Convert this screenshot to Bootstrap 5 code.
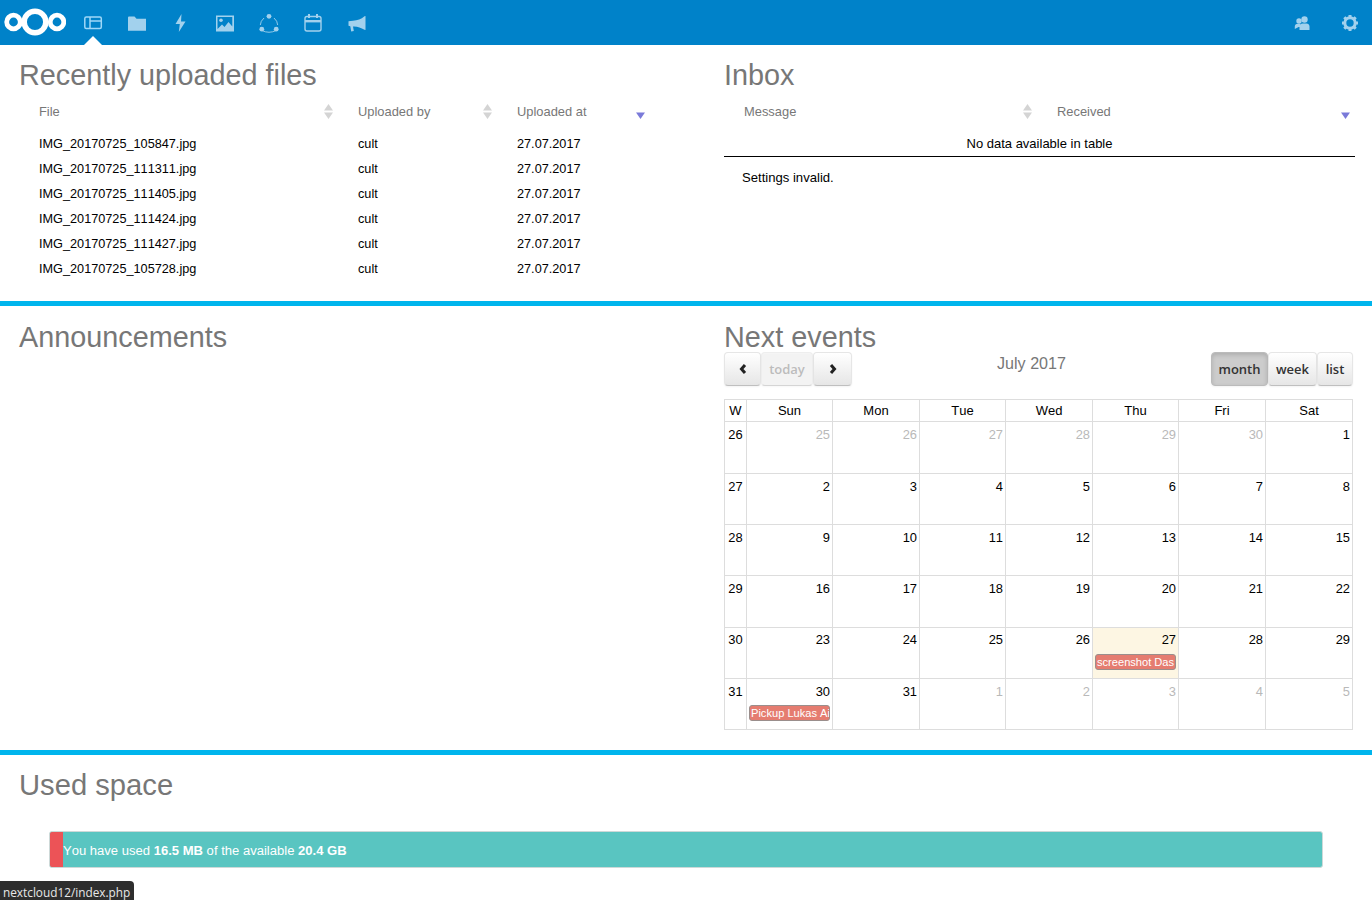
<!DOCTYPE html>
<html lang="en">
<head>
<meta charset="utf-8">
<title>Dashboard</title>
<link href="https://cdn.jsdelivr.net/npm/bootstrap@5.3.0/dist/css/bootstrap.min.css" rel="stylesheet">
<style>
body{font-family:"Liberation Sans",Arial,sans-serif;font-size:13px;font-kerning:none;color:#000;background:#fff;height:900px;overflow:hidden}
.topbar{height:45px;background:#0082c9;color:#a2d1ed}
.topbar svg{display:block}
.brand-logo{margin-left:4px;margin-right:5px;width:62px;height:45px;flex:none}
.app-slot{width:44px;height:45px;position:relative;display:flex;align-items:center;justify-content:center}
.app-slot.is-active{color:#9fd8f8}
.app-slot.is-active::after{content:"";position:absolute;left:13px;bottom:0;border:9px solid transparent;border-top:0;border-bottom-color:#fff}
.side-slot{width:44px;height:45px;display:flex;align-items:center;justify-content:center}
.dash-row{display:grid;grid-template-columns:705px 1fr}
.dash-sep{border-bottom:5px solid #00b5ed}
.pane{padding:0 17px 0 19px}
.pane-title{font-size:28.8px;line-height:36px;font-weight:400;color:#777;margin:0;padding-top:12px}
.row-two .pane-title{padding-top:13px}
.pane-title.space-title{font-size:29.2px}
.files-pane{padding-right:55px}
.row-one{height:261px}
.row-two{height:449px}
.data-tbl{width:100%;table-layout:fixed;border-collapse:collapse;margin-top:5px}
.data-tbl th{font-weight:400;font-size:12.9px;color:#777;height:33px;padding:0 0 6px 20px;position:relative}
.data-tbl td{height:25px;font-size:12.7px;padding:2px 0 0 20px;vertical-align:middle}
.data-tbl .empty-cell{padding:0;font-size:13px;text-align:center;border-bottom:1px solid #000}
.sorter{position:absolute;right:5px;top:6px;width:9px;height:15px;display:block}
.note-line{margin:13px 0 0 18px;line-height:15px;font-size:13.1px}
.cal-bar{display:grid;grid-template-columns:1fr auto 1fr;height:34px;margin-top:-3px;width:629px}
.cal-title{font-size:16.1px;color:#777;line-height:22px;margin-left:-14px}
.cal-btn{font-family:"Open Sans",sans-serif;font-size:13px;font-weight:600;color:#333;height:34px;padding:0;text-align:center;line-height:32px;border:1px solid #e6e6e6;border-bottom-color:#bfbfbf;border-radius:4px;background:linear-gradient(#fff,#e6e6e6);box-shadow:inset 0 1px 0 rgba(255,255,255,.2),0 1px 2px rgba(0,0,0,.05)}
.cal-btn.is-prev{width:37px;display:flex;align-items:center;justify-content:center}
.cal-btn.is-next{width:39px;display:flex;align-items:center;justify-content:center}
.cal-btn.is-off{opacity:.65;color:#999;background:#eee;width:52px}
.cal-btn.is-on{background:#ccc;box-shadow:inset 0 2px 4px rgba(0,0,0,.15),0 1px 2px rgba(0,0,0,.05);border-color:#bbb;color:#333;width:57px}
.cal-btn.is-week{width:49px}
.cal-btn.is-list{width:36px}
.cal-grid{width:629px;table-layout:fixed;margin:13px 0 0;--bs-border-color:#ddd;border-color:#ddd;color:#000}
.cal-grid.table>*>*>*{padding:0;background:transparent;box-shadow:none;font-size:13px}
.cal-grid.table th{height:22px;font-weight:400;text-align:center;line-height:20px}
.cal-grid.table td{vertical-align:top;text-align:right;padding:3px 2px 0 0;line-height:20px;overflow:hidden;font-size:12.9px}
.cal-grid.table td.wk-num{text-align:center;padding-right:0}
.cal-grid.table .tall-row td{height:52px}
.cal-grid.table .slim-row td{height:51px}
.cal-grid.table .raised-row td{padding-top:2px}
.cal-grid.table td.other-day{color:#b9b9b9}
.cal-grid.table td.today-cell{background:#fdf6e3}
.cal-ev{display:block;margin:3px 0 0 2px;height:16px;border:1px solid #9a8e8c;border-radius:3px;background:#e57c70;color:#fff;font-size:11.1px;line-height:14px;text-align:left;white-space:nowrap;overflow:hidden;padding-left:1px}
.raised-row .cal-ev{margin-top:4px}
.space-bar{height:37px;margin:28px 0 0 30px;width:1274px;background:#59c5c1;border:1px solid #cdd9d8;border-radius:3px;font-size:13.05px;color:#fff;--bs-progress-bg:#59c5c1}
.space-used{width:13px;background:#ec5357;flex:none}
.space-text{line-height:37px;white-space:nowrap}
.status-tip{position:fixed;left:0;bottom:0;height:19px;background:#2e2e2e;color:#e8e8e8;font-family:"Open Sans",sans-serif;font-size:11.8px;line-height:22px;padding:0 4px 0 3px;border-top-right-radius:4px}
</style>
</head>
<body>
<nav class="topbar d-flex align-items-center justify-content-between">
  <div class="d-flex align-items-center">
    <div class="brand-logo">
      <svg width="62" height="45" viewBox="0 0 62 45" fill="none" stroke="#fff">
        <circle cx="9.500" cy="22" r="6.800" stroke-width="4.800"/>
        <circle cx="31" cy="22" r="10.800" stroke-width="5.500"/>
        <circle cx="53" cy="22" r="6.800" stroke-width="4.800"/>
      </svg>
    </div>
    <div class="app-slot is-active">
      <svg width="20" height="20" viewBox="0 0 20 20" fill="none" stroke="currentColor" stroke-width="1.500"><rect x="1.800" y="4" width="16.500" height="11.500" rx="1.500"/><path d="M7 4v11.500M7 8h11"/></svg>
    </div>
    <div class="app-slot">
      <svg width="20" height="20" viewBox="0 0 20 20" fill="currentColor"><path d="M1 4.500a1 1 0 0 1 1-1h5.500l2 2.200H19v12H1z"/></svg>
    </div>
    <div class="app-slot">
      <svg width="20" height="20" viewBox="0 0 20 20" fill="currentColor"><path d="M10.500 1 4.500 11h4.300l-1 8 6.700-10.500H10z"/></svg>
    </div>
    <div class="app-slot">
      <svg width="20" height="20" viewBox="0 0 20 20"><path fill="currentColor" fill-rule="evenodd" d="M1 2.500h18v16H1zM2.500 4v12l4.500-4.500 2.500 2.500 4-5 3.800 4.500V4z"/><circle cx="6" cy="7.300" r="1.800" fill="currentColor"/></svg>
    </div>
    <div class="app-slot">
      <svg width="20" height="24" viewBox="0 0 20 24" fill="currentColor"><path fill="none" stroke="currentColor" stroke-width=".9" d="M5 7Q1.500 10 1.300 14M3 19.500Q10 23 17 19.500M18.700 14Q18.500 10 15 7"/><circle cx="10" cy="5.300" r="2.400"/><circle cx="2.800" cy="18.200" r="2.400"/><circle cx="17.200" cy="18.200" r="2.400"/></svg>
    </div>
    <div class="app-slot">
      <svg width="20" height="20" viewBox="0 0 20 20" fill="none" stroke="currentColor" stroke-width="1.400"><rect x="2" y="3.500" width="16" height="14.500" rx="2"/><path d="M2 8.200h16" stroke-width="2.400"/><path d="M6 1v4M14 1v4" stroke-width="2"/></svg>
    </div>
    <div class="app-slot">
      <svg width="20" height="20" viewBox="0 0 20 20" fill="currentColor"><path d="M18.500 3v14l-1-.2C14 14.800 11 13.800 7 13.500l-1 .1.800 4.400-2.600.6L3.300 13.300 1.500 12.800V8.300L6 7.700c4.500-.3 8-1.500 11.500-4.500z"/></svg>
    </div>
  </div>
  <div class="d-flex align-items-center gap-1">
    <div class="side-slot">
      <svg width="18" height="18" viewBox="0 0 18 18" fill="currentColor"><circle cx="6" cy="7" r="2.700"/><circle cx="11.500" cy="5.500" r="3.200"/><path d="M1.800 15v-2.500c0-1.500 1-2.500 3-2.700h2.500c-.3.500-.3 1-.3 1.500v1zM6.500 16v-3.800c0-1.500 1.500-2.700 3-2.700h4c1.500 0 3 1.200 3 2.700V16z"/></svg>
    </div>
    <div class="side-slot">
      <svg width="18" height="18" viewBox="0 0 18 18" fill="none" stroke="currentColor"><circle cx="9" cy="9" r="5.200" stroke-width="3"/><path stroke-width="3" d="M9 1v3M9 14v3M1 9h3M14 9h3M3.300 3.300l2.100 2.100M12.600 12.600l2.100 2.100M3.300 14.700l2.100-2.100M12.600 5.400l2.100-2.100"/></svg>
    </div>
  </div>
</nav>

<section class="dash-row dash-sep row-one">
  <div class="pane files-pane">
    <h2 class="pane-title">Recently uploaded files</h2>
    <table class="data-tbl">
      <colgroup><col style="width:319px"><col style="width:159px"><col></colgroup>
      <thead><tr>
        <th>File<svg class="sorter" viewBox="0 0 8 14" preserveAspectRatio="none" fill="#d4d4d4"><path d="M4 0 8 6H0zM0 8h8l-4 6z"/></svg></th>
        <th>Uploaded by<svg class="sorter" viewBox="0 0 8 14" preserveAspectRatio="none" fill="#d4d4d4"><path d="M4 0 8 6H0zM0 8h8l-4 6z"/></svg></th>
        <th>Uploaded at<svg class="sorter" viewBox="0 0 8 14" preserveAspectRatio="none" fill="#7a7ad9"><path d="M0 8h8l-4 6z"/></svg></th>
      </tr></thead>
      <tbody>
        <tr><td>IMG_20170725_105847.jpg</td><td>cult</td><td>27.07.2017</td></tr>
        <tr><td>IMG_20170725_111311.jpg</td><td>cult</td><td>27.07.2017</td></tr>
        <tr><td>IMG_20170725_111405.jpg</td><td>cult</td><td>27.07.2017</td></tr>
        <tr><td>IMG_20170725_111424.jpg</td><td>cult</td><td>27.07.2017</td></tr>
        <tr><td>IMG_20170725_111427.jpg</td><td>cult</td><td>27.07.2017</td></tr>
        <tr><td>IMG_20170725_105728.jpg</td><td>cult</td><td>27.07.2017</td></tr>
      </tbody>
    </table>
  </div>
  <div class="pane">
    <h2 class="pane-title">Inbox</h2>
    <table class="data-tbl">
      <colgroup><col style="width:313px"><col></colgroup>
      <thead><tr>
        <th>Message<svg class="sorter" viewBox="0 0 8 14" preserveAspectRatio="none" fill="#d4d4d4"><path d="M4 0 8 6H0zM0 8h8l-4 6z"/></svg></th>
        <th>Received<svg class="sorter" viewBox="0 0 8 14" preserveAspectRatio="none" fill="#7a7ad9"><path d="M0 8h8l-4 6z"/></svg></th>
      </tr></thead>
      <tbody><tr><td colspan="2" class="empty-cell">No data available in table</td></tr></tbody>
    </table>
    <p class="note-line">Settings invalid.</p>
  </div>
</section>

<section class="dash-row dash-sep row-two">
  <div class="pane">
    <h2 class="pane-title">Announcements</h2>
  </div>
  <div class="pane">
    <h2 class="pane-title">Next events</h2>
    <div class="cal-bar">
      <div class="d-flex">
        <div class="cal-btn is-prev"><svg width="10" height="12" viewBox="0 0 10 12" fill="none" stroke="#222" stroke-width="3"><path d="M7 2 3.500 6 7 10"/></svg></div>
        <div class="cal-btn is-off">today</div>
        <div class="cal-btn is-next"><svg width="10" height="12" viewBox="0 0 10 12" fill="none" stroke="#222" stroke-width="3"><path d="M3 2 6.500 6 3 10"/></svg></div>
      </div>
      <div class="cal-title">July 2017</div>
      <div class="d-flex justify-content-end">
        <div class="cal-btn is-on">month</div>
        <div class="cal-btn is-week">week</div>
        <div class="cal-btn is-list">list</div>
      </div>
    </div>
    <table class="table table-bordered cal-grid">
      <colgroup><col style="width:22px"><col style="width:86px"><col style="width:87px"><col style="width:86px"><col style="width:87px"><col style="width:86px"><col style="width:87px"><col style="width:87px"></colgroup>
      <thead><tr><th>W</th><th>Sun</th><th>Mon</th><th>Tue</th><th>Wed</th><th>Thu</th><th>Fri</th><th>Sat</th></tr></thead>
      <tbody>
        <tr class="tall-row"><td class="wk-num">26</td><td class="other-day">25</td><td class="other-day">26</td><td class="other-day">27</td><td class="other-day">28</td><td class="other-day">29</td><td class="other-day">30</td><td>1</td></tr>
        <tr class="slim-row"><td class="wk-num">27</td><td>2</td><td>3</td><td>4</td><td>5</td><td>6</td><td>7</td><td>8</td></tr>
        <tr class="slim-row"><td class="wk-num">28</td><td>9</td><td>10</td><td>11</td><td>12</td><td>13</td><td>14</td><td>15</td></tr>
        <tr class="tall-row"><td class="wk-num">29</td><td>16</td><td>17</td><td>18</td><td>19</td><td>20</td><td>21</td><td>22</td></tr>
        <tr class="slim-row raised-row"><td class="wk-num">30</td><td>23</td><td>24</td><td>25</td><td>26</td><td class="today-cell">27<span class="cal-ev">screenshot Das</span></td><td>28</td><td>29</td></tr>
        <tr class="slim-row"><td class="wk-num">31</td><td>30<span class="cal-ev">Pickup Lukas Ai</span></td><td>31</td><td class="other-day">1</td><td class="other-day">2</td><td class="other-day">3</td><td class="other-day">4</td><td class="other-day">5</td></tr>
      </tbody>
    </table>
  </div>
</section>

<section class="pane">
  <h2 class="pane-title space-title">Used space</h2>
  <div class="progress space-bar">
    <div class="space-used"></div>
    <div class="space-text">You have used <b>16.5 MB</b> of the available <b>20.4 GB</b></div>
  </div>
</section>

<div class="status-tip">nextcloud12/index.php</div>
<script src="https://cdn.jsdelivr.net/npm/bootstrap@5.3.0/dist/js/bootstrap.bundle.min.js"></script>
</body>
</html>
